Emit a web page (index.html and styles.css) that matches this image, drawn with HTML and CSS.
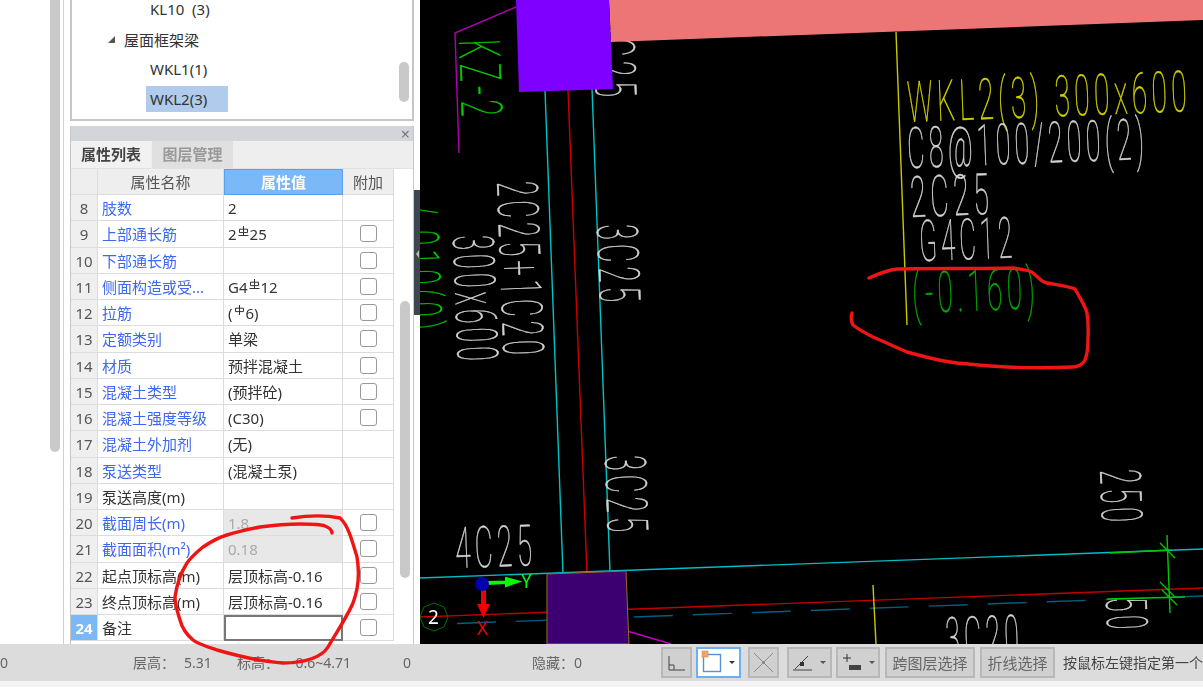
FILE: index.html
```html
<!DOCTYPE html>
<html lang="zh-CN">
<head>
<meta charset="utf-8">
<title>属性列表</title>
<link rel="stylesheet" href="styles.css">
</head>
<body>
<svg class="defs" width="0" height="0" aria-hidden="true">
  <symbol id="rebar3" viewBox="0 0 11 11"><path d="M5.5 0V9M1.5 3.2H9.5V6.6H1.5ZM0.5 9.5H10.5" fill="none" stroke="#333" stroke-width="1"/></symbol>
  <symbol id="rebar1" viewBox="0 0 11 11"><path d="M5.5 0V10M1.5 3.2H9.5V6.6H1.5Z" fill="none" stroke="#333" stroke-width="1"/></symbol>
</svg>
<div class="app">
  <div class="main">
    <div class="blank"></div>
    <div class="rail"><div class="rail-thumb"></div></div>
    <div class="rail-gap"></div>
    <div class="side">
      <div class="tree">
        <div class="node lvl2">KL10&nbsp; (3)</div>
        <div class="node lvl1"><span class="tri"></span>屋面框架梁</div>
        <div class="node lvl2">WKL1(1)</div>
        <div class="node lvl2"><span class="selected">WKL2(3)</span></div>
        <div class="tree-thumb"></div>
      </div>
      <div class="panel">
        <div class="panel-head"><span class="close">×</span></div>
        <div class="tabs">
          <div class="tab active">属性列表</div>
          <div class="tab">图层管理</div>
        </div>
        <div class="panel-body">
          <div class="grid">
            <div class="hd"></div><div class="hd">属性名称</div><div class="hd hd-on">属性值</div><div class="hd">附加</div>

            <div class="num">8</div><div class="name">肢数</div><div class="val">2</div><div class="chk"></div>
            <div class="num">9</div><div class="name">上部通长筋</div><div class="val">2<svg class="bar"><use href="#rebar3"/></svg>25</div><div class="chk"><i></i></div>
            <div class="num">10</div><div class="name">下部通长筋</div><div class="val"></div><div class="chk"><i></i></div>
            <div class="num">11</div><div class="name">侧面构造或受...</div><div class="val">G4<svg class="bar"><use href="#rebar3"/></svg>12</div><div class="chk"><i></i></div>
            <div class="num">12</div><div class="name">拉筋</div><div class="val">(<svg class="bar"><use href="#rebar1"/></svg>6)</div><div class="chk"><i></i></div>
            <div class="num">13</div><div class="name">定额类别</div><div class="val">单梁</div><div class="chk"><i></i></div>
            <div class="num">14</div><div class="name">材质</div><div class="val">预拌混凝土</div><div class="chk"><i></i></div>
            <div class="num">15</div><div class="name">混凝土类型</div><div class="val">(预拌砼)</div><div class="chk"><i></i></div>
            <div class="num">16</div><div class="name">混凝土强度等级</div><div class="val">(C30)</div><div class="chk"><i></i></div>
            <div class="num">17</div><div class="name">混凝土外加剂</div><div class="val">(无)</div><div class="chk"></div>
            <div class="num">18</div><div class="name">泵送类型</div><div class="val">(混凝土泵)</div><div class="chk"></div>
            <div class="num">19</div><div class="name plain">泵送高度(m)</div><div class="val"></div><div class="chk"></div>
            <div class="num">20</div><div class="name">截面周长(m)</div><div class="val off">1.8</div><div class="chk"><i></i></div>
            <div class="num">21</div><div class="name">截面面积(m²)</div><div class="val off">0.18</div><div class="chk"><i></i></div>
            <div class="num">22</div><div class="name plain">起点顶标高(m)</div><div class="val">层顶标高-0.16</div><div class="chk"><i></i></div>
            <div class="num">23</div><div class="name plain">终点顶标高(m)</div><div class="val">层顶标高-0.16</div><div class="chk"><i></i></div>
            <div class="num num-on">24</div><div class="name plain">备注</div><div class="val editing"></div><div class="chk"><i></i></div>
          </div>
          <div class="grid-rail"><div class="grid-thumb"></div></div>
        </div>
      </div>
    </div>
    <div class="splitter"><div class="split-handle"><span></span></div></div>
    <svg class="canvas" viewBox="420 0 783 644" xmlns="http://www.w3.org/2000/svg">
      <rect x="420" y="0" width="783" height="644" fill="#000"/>
      <g fill="none" stroke-width="1.4">
        <path d="M545 90L563 574" stroke="#00c4c4"/>
        <path d="M592 88L610 572" stroke="#00c4c4"/>
        <path d="M568 90L587 574" stroke="#c80000"/>
        <path d="M420 578L1203 549" stroke="#00bcc4"/>
        <path d="M420 617L1203 588" stroke="#c00000"/>
        <path d="M457 623.5L1203 596" stroke="#005f80" stroke-dasharray="39 20"/>
        <path d="M516 7L455 33L459 153" stroke="#b000b0"/>
        <path d="M627 631L671 644" stroke="#c800c8"/>
        <path d="M896 32L907 325" stroke="#c8c800"/>
        <path d="M873 585L876 644" stroke="#c8c800"/>
        <path d="M1110 553L1170 550M1107 599L1185 597M1167 535L1170 613M1160 543L1175 558M1162 590L1177 605M1160 582L1175 597" stroke="#00c800"/>
      </g>
      <text class="cad white" transform="translate(593 19) rotate(87.8)" textLength="83" lengthAdjust="spacingAndGlyphs">3C25</text>
      <polygon points="609,0 1203,0 1203,20 611,42" fill="#ec7676"/>
      <polygon points="516,0 609,0 613,89 519,92" fill="#8000ff"/>
      <polygon points="547,574 626,571 629,644 547,644" fill="#3c0070" stroke="#a06a20" stroke-width="1"/>

      <text class="cad green" transform="translate(459 40) rotate(87.8)" textLength="82" lengthAdjust="spacingAndGlyphs">KZ-2</text>
      <text class="cad white" transform="translate(497 182) rotate(87.8)" textLength="178" lengthAdjust="spacingAndGlyphs">2C25+1C20</text>
      <text class="cad white" transform="translate(453 236) rotate(87.8)" textLength="130" lengthAdjust="spacingAndGlyphs">300x600</text>
      <text class="cad white" transform="translate(597 225) rotate(87.8)" textLength="82" lengthAdjust="spacingAndGlyphs">3C25</text>
      <text class="cad white" transform="translate(605 456) rotate(87.8)" textLength="81" lengthAdjust="spacingAndGlyphs">3C25</text>
      <text class="cad white" transform="translate(1100 470) rotate(87.8)" textLength="57" lengthAdjust="spacingAndGlyphs">250</text>
      <text class="cad white" transform="translate(1106 598) rotate(87.8)" textLength="36" lengthAdjust="spacingAndGlyphs">50</text>
      <text class="cad green" transform="translate(397 205) rotate(87.8)" textLength="130" lengthAdjust="spacingAndGlyphs">/ 010(0)</text>
      <text class="cad white" transform="translate(456 568) rotate(-2.2)" textLength="81" lengthAdjust="spacingAndGlyphs">4C25</text>
      <text class="cad white" transform="translate(946 658) rotate(-2.2)" textLength="78" lengthAdjust="spacingAndGlyphs">3C20</text>

      <text class="cad yellow" transform="translate(908 122) rotate(-2.2)" textLength="284" lengthAdjust="spacingAndGlyphs">WKL2(3) 300x600</text>
      <text class="cad white" transform="translate(908 168) rotate(-2.2)" textLength="241" lengthAdjust="spacingAndGlyphs">C8@100/200(2)</text>
      <text class="cad white" transform="translate(911 217) rotate(-2.2)" textLength="83" lengthAdjust="spacingAndGlyphs">2C25</text>
      <text class="cad white" transform="translate(920 261) rotate(-2.2)" textLength="97" lengthAdjust="spacingAndGlyphs">G4C12</text>
      <text class="cad green2" transform="translate(913 313) rotate(-2.2)" textLength="127" lengthAdjust="spacingAndGlyphs">(-0.160)</text>

      <polygon points="434,603 444,607 448,617 444,627 434,631 424,627 420,617 424,607" fill="none" stroke="#007000" stroke-width="1"/>
      <text class="axis2" x="428" y="624">2</text>
      <path d="M488 582L506 581.5V578L519 581.5L506 586V583L488 584Z" fill="#00ff00" stroke="#00ff00" stroke-width="2"/>
      <path d="M481 590H486V604H490L483.500 618L477 604H481Z" fill="#f00000"/>
      <circle cx="482" cy="584" r="7" fill="#0000b0"/>
      <text class="axisl green3" x="521" y="588">Y</text>
      <text class="axisl red" x="477" y="635">X</text>
    </svg>
  </div>
  <div class="status">
    <div class="s s0">0</div>
    <div class="s s1">层高：<span class="v1">5.31</span></div>
    <div class="s s2">标高：<span class="v2">-0.6~4.71</span></div>
    <div class="s s3">0</div>
    <div class="s s4">隐藏：0</div>
    <div class="btn ico ico1"><svg width="27" height="27" viewBox="0 0 27 27"><path d="M6 7V21H22M6 16H11V21" fill="none" stroke="#444" stroke-width="1"/></svg></div>
    <div class="btn ico ico2"><svg width="41" height="27" viewBox="0 0 41 27"><rect x="5.500" y="5.500" width="17" height="17" fill="#fff" stroke="#5a8fd8" stroke-width="1.400"/><rect x="4" y="2" width="6" height="6" fill="#f5a468" stroke="#f08030" stroke-width=".6"/><path d="M31 12H37L34 15Z" fill="#333"/></svg></div>
    <div class="btn ico ico3"><svg width="27" height="27" viewBox="0 0 27 27"><path d="M4 4L23 23M23 4L4 23" stroke="#8a8a8a" stroke-width="1"/><rect x="12" y="12" width="3" height="3" fill="#8a8a8a"/></svg></div>
    <div class="btn ico ico4"><svg width="41" height="27" viewBox="0 0 41 27"><path d="M4 21H23M6 20L19 7" fill="none" stroke="#444" stroke-width="1"/><rect x="11" y="13" width="4" height="4" fill="#333"/><path d="M31 12H37L34 15Z" fill="#555"/></svg></div>
    <div class="btn ico ico5"><svg width="40" height="27" viewBox="0 0 40 27"><path d="M9 5V13M5 9H13" stroke="#333" stroke-width="1"/><rect x="11" y="16" width="12" height="5" fill="#444"/><path d="M31 12H37L34 15Z" fill="#555"/></svg></div>
    <div class="btn txt t1">跨图层选择</div>
    <div class="btn txt t2">折线选择</div>
    <div class="hint">按鼠标左键指定第一个端点</div>
  </div>
  <div class="foot"></div>
  <svg class="ink" viewBox="0 0 1203 687" xmlns="http://www.w3.org/2000/svg" aria-hidden="true">
    <path d="M292 518C305 516 325 515 340 518C348 525 352 540 357 557C360 575 358 590 353 603C348 615 338 630 328 647C322 657 305 663 283 663C265 662 245 658 217 650C205 646 198 644 193 640C186 634 182 628 180 620C177 610 175 605 175 597C176 590 178 577 187 563C192 556 197 552 203 547C212 541 220 537 227 535C240 531 250 529 260 527C275 525 290 524 300 524C312 524 320 524 325 526C330 528 332 530 332 533"/>
    <path d="M869 278C878 274 887 270 897 269C920 268 980 269 1013 268C1025 270 1030 270 1033 273C1040 279 1042 282 1047 283C1058 285 1068 286 1075 289C1080 298 1085 305 1087 313C1089 325 1088 335 1088 340C1088 350 1087 355 1085 360C1083 364 1078 367 1073 367C1050 368 1030 368 1007 367C985 366 970 364 957 363C940 361 925 357 907 352C895 347 885 342 873 337C865 333 858 329 853 325C851 321 851 316 852 313"/>
  </svg>
</div>
</body>
</html>
```
FILE: styles.css
```css
* { box-sizing: border-box; }
html, body { margin: 0; padding: 0; }
body { width: 1203px; height: 687px; overflow: hidden; background: #fff; font-family: "Noto Sans", "Noto Sans CJK SC", sans-serif; font-size: 15px; color: #333; }
.defs { position: absolute; }
.app { position: relative; width: 1203px; height: 687px; display: flex; flex-direction: column; overflow: hidden; filter: blur(0.35px); }
.main { height: 644px; display: flex; overflow: hidden; }
.blank { width: 50px; background: #fff; }
.rail { width: 10px; }
.rail-thumb { height: 452px; background: #c9c9c9; border-radius: 0 0 5px 5px; }
.rail-gap { width: 10px; border-left: 3px solid #fff; }
.rail-gap::before { content: ""; display: block; width: 1px; height: 100%; background: #d0d0d0; }
.side { width: 344px; display: flex; flex-direction: column; }
.tree { position: relative; height: 122px; border: solid #c6c6c6; border-width: 0 2px 2px 2px; background: #fff; margin-top: -1px; padding-left: 34px; }
.node { height: 30px; display: flex; align-items: center; white-space: nowrap; }
.node:first-child { margin-top: -5px; }
.lvl2 { padding-left: 44px; }
.lvl1 { padding-left: 1px; }
.tri { width: 0; height: 0; border-style: solid; border-width: 0 0 7px 7px; border-color: transparent transparent #555 transparent; margin-right: 9px; margin-left: 1px; }
.selected { background: #b0cbeb; margin-left: -4px; padding: 0 21px 0 4px; height: 26px; line-height: 26px; display: block; }
.tree-thumb { position: absolute; right: 3px; top: 63px; width: 10px; height: 40px; border-radius: 5px; background: #c9c9c9; }
.panel { margin-top: 5px; flex: 1; min-height: 0; border-left: 1px solid #c6c6c6; border-right: 1px solid #c6c6c6; display: flex; flex-direction: column; background: #fff; }
.panel-head { height: 15px; background: #d2d5da; display: flex; justify-content: flex-end; align-items: center; padding-right: 3px; }
.close { font-size: 16px; line-height: 14px; color: #777; }
.tabs { height: 28px; background: #eee; display: flex; border-bottom: 1px solid #e2e2e2; }
.tab { width: 81px; line-height: 27px; text-align: center; background: #e0e0e0; color: #999; font-weight: 700; margin-right: 1px; }
.tab.active { width: 80px; background: #f1f1f1; color: #444; }
.panel-body { display: flex; flex: 1; min-height: 0; overflow: hidden; }
.grid { width: 323px; display: grid; grid-template-columns: 27px 126px 119px 51px; grid-template-rows: 26px; grid-auto-rows: 26.25px; align-content: start; }
.grid > div { border-right: 1px solid #dcdcdc; border-bottom: 1px solid #dcdcdc; white-space: nowrap; }
.hd { background: #eee; text-align: center; line-height: 27px; color: #555; }
.hd-on { background: #7ab8f8; color: #fff; font-weight: 700; border: 1px solid #5aa0e8 !important; line-height: 25px; }
.num { background: #efefef; text-align: center; line-height: 27px; color: #555; }
.num-on { background: #7ab8f8; color: #fff; font-weight: 700; }
.name { color: #3d68f0; padding-left: 4px; line-height: 27px; }
.plain { color: #333; }
.val { padding-left: 4px; line-height: 27px; color: #333; }
.off { background: #e8e8e8; color: #aaa; }
.editing { border: 2px solid #777 !important; }
.chk { display: flex; align-items: center; justify-content: center; }
.chk i { width: 17px; height: 17px; border: 1px solid #999; border-radius: 3px; background: #fff; display: block; }
.bar { width: 11px; height: 11px; vertical-align: 3px; margin: 0 1px; }
.grid-rail { flex: 1; position: relative; }
.grid-thumb { position: absolute; left: 6px; top: 132px; width: 10px; height: 277px; border-radius: 5px; background: #c9c9c9; }
.splitter { width: 6px; background: #fff; }
.split-handle { margin-top: 190px; height: 125px; background: #3e4650; position: relative; }
.split-handle span { position: absolute; left: 2px; top: 60px; width: 0; height: 0; border-style: solid; border-width: 4px 3px 4px 0; border-color: transparent #bbb transparent transparent; }
.canvas { width: 783px; height: 644px; display: block; }
.cad { font-family: Roboto, "Liberation Sans", sans-serif; font-weight: 100; font-size: 57px; stroke-width: 0.5px; letter-spacing: 9px; }
.white { fill: #d2d2d2; stroke: #d2d2d2; }
.yellow { fill: #d2d200; stroke: #d2d200; }
.green { fill: #00d000; stroke: #00d000; }
.green2 { fill: #00b000; stroke: #00b000; }
.axis2 { font-family: "Noto Sans", sans-serif; font-size: 19px; fill: #fff; }
.axisl { font-family: "Noto Sans", sans-serif; font-size: 19px; }
.green3 { fill: #00ff00; }
.red { fill: #f00000; }
.status { height: 37px; background: #dcdcdc; display: flex; align-items: center; padding-bottom: 1px; overflow: hidden; white-space: nowrap; color: #666; font-size: 14px; }
.s { flex: none; }
.s0 { width: 133px; }
.s1 { width: 104px; }
.s2 { width: 166px; }
.s3 { width: 129px; }
.s4 { width: 129px; }
.v1 { margin-left: 9px; }
.v2 { margin-left: 12px; }
.btn { height: 31px; background: #d0d0d0; border: 2px solid #b8b8b8; display: flex; align-items: center; margin-right: 4px; flex: none; }
.ico svg { display: block; }
.ico1 { width: 31px; }
.ico2 { width: 45px; background: #fff; border: 2px solid #6ab0f5; margin-right: 7px; }
.ico3 { width: 31px; margin-right: 8px; }
.ico4 { width: 45px; }
.ico5 { width: 44px; margin-right: 5px; }
.txt { justify-content: center; font-size: 15px; }
.t1 { width: 90px; margin-right: 5px; }
.t2 { width: 75px; margin-right: 8px; }
.hint { color: #444; font-size: 14px; flex: none; }
.foot { height: 6px; background: #f4f4f4; }
.ink { position: absolute; left: 0; top: 0; width: 1203px; height: 687px; pointer-events: none; fill: none; stroke: #f01414; stroke-width: 3.4; stroke-linecap: round; stroke-linejoin: round; }
```
